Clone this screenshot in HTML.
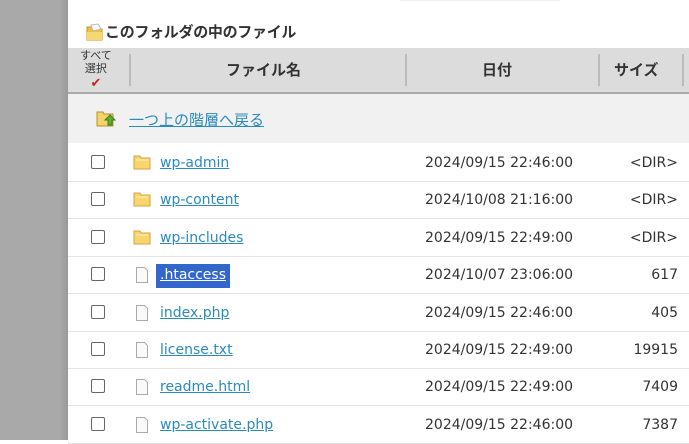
<!DOCTYPE html>
<html><head><meta charset="utf-8"><style>
body{margin:0;width:689px;height:440px;overflow:hidden;background:#fff;font-family:"Liberation Sans","Noto Sans CJK JP",sans-serif;position:relative}
.left{position:absolute;left:0;top:0;width:68px;height:440px;background:linear-gradient(to right,#a9a9a9 0,#a9a9a9 60px,#9a9a9a 68px)}
.title{position:absolute;left:85px;top:21px;font-size:15px;font-weight:bold;color:#333;display:flex;align-items:center;letter-spacing:-0.3px}
.hdr{position:absolute;left:68px;top:48px;width:621px;height:44px;background:#dcdcdc;border-bottom:2px solid #aaa}
.sep{position:absolute;top:6px;height:32px;width:2px;background:#bbb}
.h{position:absolute;top:11px;font-size:15px;font-weight:bold;color:#333}
.parent{position:absolute;left:68px;top:94px;width:621px;height:49px;background:#f1f1f1}
a{color:#2a8bc0;text-decoration:underline}
.row{position:absolute;left:68px;width:621px;height:37px;border-bottom:1px solid #e4e4e4;font-size:14px;font-family:"DejaVu Sans",sans-serif}
.cb{position:absolute;left:23px;top:11px;width:12px;height:12px;border:1.5px solid #666;border-radius:2px}
.ic{position:absolute;left:65px;top:10px}
.nm{position:absolute;left:92px;top:11px}
.dt{position:absolute;left:357px;top:11px;color:#333}
.sz{position:absolute;right:11px;top:11px;color:#333}
.sel{background:#3366cc;color:#fff;padding:3px 4px 5px 4px;margin-left:-4px}
.sel a{color:#fff}
</style></head><body>
<div class="left"></div>
<div style="position:absolute;left:400px;top:0;width:160px;height:1px;background:#eee"></div>
<div class="title"><svg width="20" height="20" viewBox="0 0 20 20"><path d="M2 5h5l1 2h9v11H2z" fill="#f0c040" stroke="#c89020"/><path d="M6 3l7-1 3 5-8 2z" fill="#fafafa" stroke="#bbb"/><path d="M2 10h15v8H2z" fill="#f7d870"/></svg>このフォルダの中のファイル</div>
<div class="hdr">
<div style="position:absolute;left:12px;top:2px;font-size:11px;color:#333;line-height:13px;text-align:center">すべて<br>選択<br><span style="color:#d02020;font-size:13px">✔</span></div>
<div class="sep" style="left:61px"></div>
<div class="h" style="left:158px">ファイル名</div>
<div class="sep" style="left:337px"></div>
<div class="h" style="left:414px">日付</div>
<div class="sep" style="left:530px"></div>
<div class="h" style="left:546px">サイズ</div>
<div class="sep" style="left:614px"></div>
</div>
<div class="parent"><svg style="position:absolute;left:28px;top:16px" width="22" height="18" viewBox="0 0 22 18"><path d="M1 2h6l1 2h9v12H1z" fill="#f3d36a" stroke="#b89030"/><path d="M14 5l5 5h-3v5h-4v-5H9z" fill="#5cb030" stroke="#3a8020"/></svg><a style="position:absolute;left:61px;top:15px;font-size:15px">一つ上の階層へ戻る</a></div>
<div id="rows"></div>
<script>
var d=[["f","wp-admin","2024/09/15 22:46:00","&lt;DIR&gt;"],["f","wp-content","2024/10/08 21:16:00","&lt;DIR&gt;"],["f","wp-includes","2024/09/15 22:49:00","&lt;DIR&gt;"],["d",".htaccess","2024/10/07 23:06:00","617"],["d","index.php","2024/09/15 22:46:00","405"],["d","license.txt","2024/09/15 22:49:00","19915"],["d","readme.html","2024/09/15 22:49:00","7409"],["d","wp-activate.php","2024/09/15 22:46:00","7387"]];
var h="";d.forEach(function(r,i){var t=144+i*37.4;
var ic=r[0]=="f"?'<svg class="ic" width="18" height="16" viewBox="0 0 18 16"><path d="M1 2h6l1 2h9v11H1z" fill="#f7d66e" stroke="#dca040"/><path d="M3 6h12" stroke="#fff3c0"/></svg>':'<svg class="ic" style="left:67px" width="14" height="18" viewBox="0 0 14 18"><path d="M1.5 1.5h8l3 3v12h-11z" fill="#fafafa" stroke="#aaa"/></svg>';
var nm=i==3?'<span class="sel"><a>'+r[1]+'</a></span>':'<a>'+r[1]+'</a>';
h+='<div class="row" style="top:'+t+'px"><div class="cb"></div>'+ic+'<div class="nm">'+nm+'</div><div class="dt">'+r[2]+'</div><div class="sz">'+r[3]+'</div></div>';});
document.getElementById("rows").innerHTML=h;
</script>
</body></html>
